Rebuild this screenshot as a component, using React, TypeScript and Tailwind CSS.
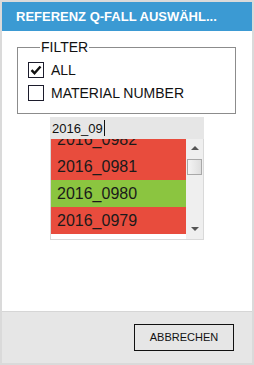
import React from 'react';

const rows = [
  { label: '2016_0982', ok: false },
  { label: '2016_0981', ok: false },
  { label: '2016_0980', ok: true },
  { label: '2016_0979', ok: false },
];

const CheckRow: React.FC<{ label: string; checked?: boolean }> = ({ label, checked }) => (
  <div className="flex items-center h-[16px]">
    <div className="w-[16px] h-[16px] border border-[#1c1c2c] bg-white flex items-center justify-center">
      {checked && (
        <svg width="12" height="12" viewBox="0 0 12 12">
          <path d="M1.5 6.2 L4.5 9.2 L10.5 2.5" fill="none" stroke="#111" strokeWidth="2.4" />
        </svg>
      )}
    </div>
    <span className="ml-[7px] text-[14px] leading-none text-[#111]">{label}</span>
  </div>
);

const App: React.FC = () => {
  return (
    <div
      className="w-[254px] h-[365px] border-2 border-[#dadada] flex flex-col bg-white"
      style={{ fontFamily: '"Liberation Sans", Arial, sans-serif' }}
    >
      {/* Title */}
      <div className="h-[29px] bg-[#3b9ad3] flex items-center px-[14px]">
        <span className="text-white font-bold text-[13px] leading-none">REFERENZ Q-FALL AUSWÄHL...</span>
      </div>

      {/* Body */}
      <div className="flex-1 flex flex-col">
        <fieldset className="ml-[15px] mt-[8px] w-[219px] h-[75px] border border-[#8c8c8c] pl-[10px] pt-[7px]">
          <legend className="ml-[12px] px-[1px] text-[14px] leading-[16px] text-[#111]">FILTER</legend>
          <div className="flex flex-col gap-[7px]">
            <CheckRow label="ALL" checked />
            <CheckRow label="MATERIAL NUMBER" />
          </div>
        </fieldset>

        {/* Combo */}
        <div className="ml-[48px] mt-[3px] w-[154px] flex flex-col">
          <div className="h-[22px] bg-[#e6e6e6] flex items-center pl-[2px]">
            <span className="text-[13px] leading-none text-[#111]">2016_09</span>
            <span className="w-px h-[16px] bg-[#111] ml-px" />
          </div>
          <div className="h-[101px] border border-[#d9d9d9] border-t-0 flex overflow-hidden">
            <div className="flex-1 overflow-hidden">
              <div className="-mt-[13px]">
                {rows.map((r) => (
                  <div
                    key={r.label}
                    className={`h-[27px] flex items-center pl-[6px] text-[16px] leading-none text-[#1a1a1a] ${
                      r.ok ? 'bg-[#8bc540]' : 'bg-[#e84c3d]'
                    }`}
                  >
                    {r.label}
                  </div>
                ))}
              </div>
            </div>
            {/* Scrollbar */}
            <div className="w-[17px] bg-[#efefef] flex flex-col items-center">
              <svg width="8" height="5" viewBox="0 0 8 5" className="mt-[6px]">
                <path d="M0 5 L4 1 L8 5 Z" fill="#555" />
              </svg>
              <div className="mt-[9px] w-[15px] h-[16px] border border-[#a8a8a8] bg-gradient-to-r from-[#f4f4f4] to-[#dedede]" />
              <div className="flex-1" />
              <svg width="8" height="5" viewBox="0 0 8 5" className="mb-[7px]">
                <path d="M0 0 L8 0 L4 4 Z" fill="#555" />
              </svg>
            </div>
          </div>
        </div>
      </div>

      {/* Footer */}
      <div className="h-[52px] bg-[#e6e6e6] border-t border-[#d6d6d6] flex items-center justify-end pr-[18px]">
        <button className="w-[100px] h-[27px] border border-[#111] text-[11px] text-[#111] bg-[#e6e6e6]">
          ABBRECHEN
        </button>
      </div>
    </div>
  );
};

export default App;
